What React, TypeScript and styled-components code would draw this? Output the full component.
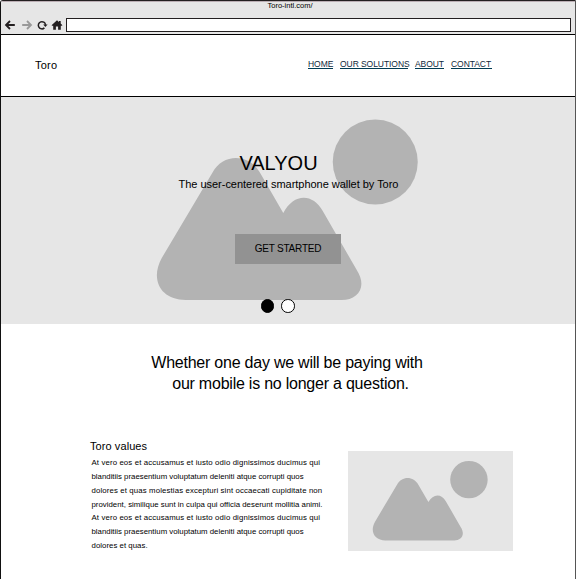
import React from 'react';
import styled, { createGlobalStyle } from 'styled-components';

const GlobalStyle = createGlobalStyle`
  * { box-sizing: border-box; }
  body { margin: 0; background: #fff; overflow: hidden; }
  h1, h2, p { margin: 0; font-weight: 400; }
`;

const Window = styled.div`
  width: 576px;
  height: 579px;
  overflow: hidden;
  display: flex;
  flex-direction: column;
  background: #fff;
  color: #000;
  border-left: 1px solid #111;
  border-right: 1px solid #555;
  border-top: 1px solid #231f20;
  border-top-left-radius: 3px;
  font-family: "Liberation Sans", Arial, sans-serif;
`;

const Chrome = styled.div`
  height: 34px;
  flex: none;
  background: #e6e6e6;
  border-top: 1px solid #bbaeb4;
  border-bottom: 1px solid #000;
`;

const Title = styled.div`
  height: 16px;
  padding: 0 0 0 4px;
  font-size: 7.5px;
  line-height: 8px;
  text-align: center;
`;

const Toolbar = styled.div`
  display: flex;
  align-items: center;
  height: 14px;
  padding: 0 4px 0 3px;
`;

const ToolIcon = styled.svg<{ $gap: number }>`
  width: 12px;
  height: 12px;
  flex: none;
  margin-right: ${p => p.$gap}px;
  margin-bottom: 1px;
`;

const Address = styled.div`
  flex: 1;
  height: 14px;
  background: #fff;
  border: 1px solid #231f20;
`;

const Header = styled.header`
  height: 62px;
  flex: none;
  display: flex;
  justify-content: space-between;
  padding: 0 83px 0 34px;
  border-bottom: 1px solid #000;
`;

const Brand = styled.div`
  padding-top: 24px;
  font-size: 11px;
  line-height: 13px;
  letter-spacing: 0.2px;
`;

const Nav = styled.nav`
  display: flex;
  gap: 7px;
  padding-top: 24px;
`;

const NavLink = styled.a<{ $width: number }>`
  width: ${p => p.$width}px;
  height: 10px;
  font-size: 8.5px;
  line-height: 10px;
  letter-spacing: -0.06px;
  white-space: nowrap;
  color: #10283a;
  border-bottom: 1px solid #003a52;
`;

const Hero = styled.section`
  height: 227px;
  flex: none;
  display: grid;
  background: #e6e6e6;
  & > * { grid-area: 1 / 1; }
`;

const Picture = styled.svg`
  display: block;
  width: 100%;
  height: 100%;
  background: #e6e6e6;
  fill: #b3b3b3;
`;

const HeroContent = styled.div`
  position: relative;
  display: flex;
  flex-direction: column;
  align-items: center;
`;

const HeroTitle = styled.h1`
  padding: 55px 19px 0 0;
  font-size: 20px;
  line-height: 23px;
`;

const Tagline = styled.p`
  padding-top: 3px;
  padding-left: 1px;
  font-size: 11px;
  line-height: 13px;
  letter-spacing: -0.03px;
`;

const Start = styled.button`
  width: 106px;
  height: 30px;
  margin-top: 43px;
  padding: 0;
  border: 0;
  background: #929292;
  color: #000;
  font: 10px/30px "Liberation Sans", Arial, sans-serif;
  letter-spacing: -0.22px;
`;

const Dots = styled.div`
  display: flex;
  gap: 7px;
  padding: 35px 21px 0 0;
`;

const Dot = styled.span<{ $active?: boolean }>`
  width: 13.5px;
  height: 13.5px;
  border: 1px solid #000;
  border-radius: 50%;
  background: ${p => (p.$active ? '#000' : '#fff')};
`;

const Statement = styled.h2`
  padding: 28px 0 0 0;
  font-size: 16px;
  line-height: 21px;
  letter-spacing: -0.23px;
  text-align: center;
  span { display: block; }
  span:first-child { padding-right: 2px; }
  span:last-child { padding-left: 5px; }
`;

const Feature = styled.section`
  display: flex;
  padding: 46px 62px 0 89px;
  justify-content: space-between;
`;

const FeatureTitle = styled.h2`
  font-size: 11px;
  line-height: 13px;
  letter-spacing: 0.08px;
`;

const Copy = styled.p`
  padding: 3px 0 0 1.5px;
  font-size: 7.8px;
  line-height: 13.85px;
`;

const CopyLine = styled.span<{ $spacing: number }>`
  display: block;
  white-space: nowrap;
  letter-spacing: ${p => p.$spacing}px;
`;

const Thumb = styled.div`
  width: 165px;
  height: 100px;
  margin-top: 11px;
`;

const Landscape = () => (
  <Picture viewBox="0 0 374.5 227">
    <circle cx="274.5" cy="65" r="42.5" />
    <path d="M111.500 76C122 56 149 56 160 77L182.500 116C193 96 212 96 222 114L256 173C267 190 257 203 241 203H85C60 203 49 183 61 161Z" />
  </Picture>
);

const Arrow = ({ color, flip, gap }: { color: string; flip?: boolean; gap: number }) => (
  <ToolIcon $gap={gap} viewBox="0 0 12 12" fill="none" stroke={color} strokeWidth="1.8">
    <g transform={flip ? 'matrix(-1 0 0 1 12 0)' : undefined}>
      <path d="M6 2L2 6l4 4M2.300 6H10.800" />
    </g>
  </ToolIcon>
);

const links = [
  { label: 'HOME', width: 25 },
  { label: 'OUR SOLUTIONS', width: 68 },
  { label: 'ABOUT', width: 29 },
  { label: 'CONTACT', width: 41 },
];

const copy = [
  { text: 'At vero eos et accusamus et iusto odio dignissimos ducimus qui', spacing: 0.13 },
  { text: 'blanditiis praesentium voluptatum deleniti atque corrupti quos', spacing: 0.01 },
  { text: 'dolores et quas molestias excepturi sint occaecati cupiditate non', spacing: 0.13 },
  { text: 'provident, similique sunt in culpa qui officia deserunt mollitia animi.', spacing: 0.02 },
  { text: 'At vero eos et accusamus et iusto odio dignissimos ducimus qui', spacing: 0.13 },
  { text: 'blanditiis praesentium voluptatum deleniti atque corrupti quos', spacing: 0.01 },
  { text: 'dolores et quas.', spacing: 0.04 },
];

export default function App() {
  return (
    <>
      <GlobalStyle />
      <Window>
        <Chrome>
          <Title>Toro-intl.com/</Title>
          <Toolbar>
            <Arrow color="#231f20" gap={5} />
            <Arrow color="#999" flip gap={3} />
            <ToolIcon $gap={3} viewBox="0 0 12 12">
              <path d="M8.400 8.900A3.600 3.600 0 1 1 9.500 5.800" fill="none" stroke="#231f20" strokeWidth="1.500" />
              <path d="M7.200 5.400H11.600L9.400 8Z" fill="#231f20" />
            </ToolIcon>
            <ToolIcon $gap={3} viewBox="0 0 12 12" fill="#231f20">
              <path d="M6 1.300L8 3V2h1.700v2.400L11.200 6v.7H9.800v4H7.100V7.500H4.900v3.200H2.200v-4H.8V6Z" />
            </ToolIcon>
            <Address />
          </Toolbar>
        </Chrome>
        <Header>
          <Brand>Toro</Brand>
          <Nav>
            {links.map(l => <NavLink key={l.label} $width={l.width}>{l.label}</NavLink>)}
          </Nav>
        </Header>
        <Hero>
          <Landscape />
          <HeroContent>
            <HeroTitle>VALYOU</HeroTitle>
            <Tagline>The user-centered smartphone wallet by Toro</Tagline>
            <Start>GET STARTED</Start>
            <Dots><Dot $active /><Dot /></Dots>
          </HeroContent>
        </Hero>
        <Statement>
          <span>Whether one day we will be paying with</span>
          <span>our mobile is no longer a question.</span>
        </Statement>
        <Feature>
          <div>
            <FeatureTitle>Toro values</FeatureTitle>
            <Copy>
              {copy.map((c, i) => <CopyLine key={i} $spacing={c.spacing}>{c.text}</CopyLine>)}
            </Copy>
          </div>
          <Thumb><Landscape /></Thumb>
        </Feature>
      </Window>
    </>
  );
}
